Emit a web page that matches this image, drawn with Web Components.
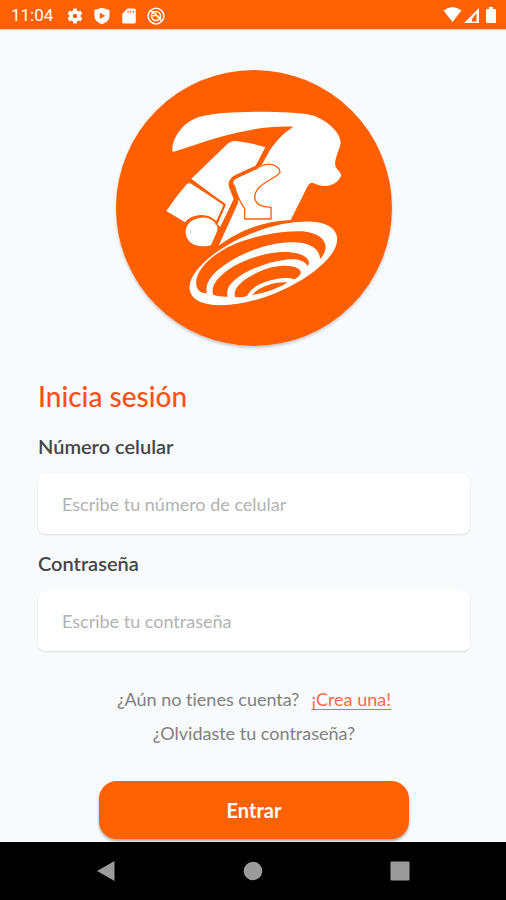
<!DOCTYPE html>
<html lang="es">
<head>
<meta charset="utf-8">
<meta name="viewport" content="width=device-width, initial-scale=1">
<title>Inicia sesión</title>
<style>
html, body { margin: 0; background: #f8fafc; }
body { font-family: Lato, "Open Sans", sans-serif; font-variant-ligatures: none; }
</style>
</head>
<body>
<login-screen></login-screen>
<script>
function define(name, html, init) {
  const template = document.createElement('template');
  template.innerHTML = html;
  customElements.define(name, class extends HTMLElement {
    constructor() {
      super();
      this.attachShadow({ mode: 'open' }).append(template.content.cloneNode(true));
    }
    connectedCallback() { if (init) init(this, this.shadowRoot); }
  });
}

define('status-bar', `
<style>
:host { display: flex; align-items: center; justify-content: space-between; height: 29px; padding: 0 6px 0 11px; background: #ff6104; color: #fff; font: 17px/29px Roboto, sans-serif; box-shadow: 0 1px 1px #ffc9a8; }
.left { display: flex; align-items: center; gap: 9px; padding-top: 2px; }
.right { display: flex; align-items: center; gap: 1px; padding-top: 1px; }
time { margin-right: 4px; }
svg { display: block; width: 18px; height: 18px; fill: #fff; }
</style>
<div class="left">
  <time>11:04</time>
  <svg viewBox="0 0 24 24"><path fill-rule="evenodd" d="M19.4 13c0-.3.1-.6.1-1s0-.7-.1-1l2.100-1.700c.2-.1.300-.4.100-.6l-2-3.500c-.1-.2-.4-.3-.6-.2l-2.500 1a7.300 7.300 0 0 0-1.700-1l-.4-2.600c0-.3-.2-.4-.4-.4h-4c-.3 0-.5.200-.5.400L9.100 5a7.700 7.700 0 0 0-1.700 1l-2.500-1c-.2-.1-.5 0-.6.200l-2 3.500c-.1.200-.1.500.1.600L4.500 11a7.900 7.900 0 0 0 0 2l-2.100 1.700c-.2.100-.2.400-.1.600l2 3.500c.1.200.4.300.6.200l2.500-1c.5.400 1.100.7 1.700 1l.4 2.600c0 .200.2.400.5.400h4c.2 0 .4-.2.4-.4l.4-2.600c.6-.3 1.200-.6 1.700-1l2.500 1c.2.100.5 0 .6-.2l2-3.500c.2-.2.1-.5-.1-.6zM12 15a3 3 0 1 1 0-6 3 3 0 0 1 0 6z"/></svg>
  <svg viewBox="0 0 24 24"><path fill-rule="evenodd" d="M12 1 2 4v8c0 5 4 9 10 11 6-2 10-6 10-11V4zM9 7.500v8.500l7.500-4.200z"/></svg>
  <svg viewBox="0 0 24 24"><path fill-rule="evenodd" d="M10 2 3 9v11q0 2 2 2h14q2 0 2-2V4q0-2-2-2zM10 4.500h1.500v3H10zm3.500 0H15v3h-1.500zm3.500 0h1.500v3H17z"/></svg>
  <svg viewBox="0 0 24 24"><g fill="none" stroke="#fff"><circle cx="12" cy="12" r="10.500" stroke-width="2"/><circle cx="12" cy="12" r="6" stroke-width="2.200"/><path d="M5 6q3-1 6 3l8 9M5 12l8-1" stroke-width="2.200"/></g></svg>
</div>
<div class="right">
  <svg viewBox="0 0 18 18" style="width:19px"><path d="M0 4.500Q9-2.500 18 4.500L9 16z"/></svg>
  <svg viewBox="0 0 18 18"><path fill-rule="evenodd" d="M1 17 16 2v15zm8-4v2.500h4.500V7z"/></svg>
  <svg viewBox="0 0 18 18"><path d="M7 1h4v2h2q1 0 1 1v12q0 1-1 1H5q-1 0-1-1V4q0-1 1-1h2z"/></svg>
</div>`);

define('brand-logo', `
<style>
:host { display: block; width: 276px; aspect-ratio: 1; border-radius: 50%; box-shadow: 0 2px 3px #0003; }
svg { display: block; width: 100%; height: 100%; }
</style>
<svg viewBox="17 18 828 828" role="img" aria-label="Logotipo">
  <circle cx="431" cy="432" r="414" fill="#ff5f00"/>
  <g fill="#fff">
    <path d="M186 262C184 222 217 175 266 159C340 137 560 141 606 154C642 165 691 202 691 237C687 261 671 286 675 305C679 317 691 324 693 333C686 354 664 369 636 365C620 364 612 355 602 357C592 360 586 380 579 392L541 468C460 470 382 502 325 545L384 415L362 352L454 303L479 258C500 229 519 207 549 188C446 182 330 215 195 262Q188 264 186 262Z"/>
    <path d="M243 344 352 239Q363 229 376 231Q422 237 461 248Q469 250 465 257L436 308 368 341Q348 351 358 374L370 405 331 489 321 481 346 424Z"/>
    <path d="M168 441Q196 399 229 361Q234 356 240 358L335 419Q342 423 339 429L318 471Q298 451 270 453Q238 455 224 475Z"/>
    <path d="M321 500Q324 486 314 476Q297 459 272 461C245 463 226 480 226 505C227 533 250 547 275 547Q296 547 303 543Z"/>
  </g>
  <g fill="none" stroke="#ff5f00" stroke-linejoin="round">
    <path d="M471 250 440 309 379 337Q358 346 365 365L377 407 306 548" stroke-width="11"/>
    <path d="M446 309Q468 297 486 302C501 306 511 317 508 326C502 339 462 351 443 374C424 398 434 425 464 428L482 430V465H403V434Q382 405 371 362" stroke-width="4"/>
    <path d="M362 359 383 410" stroke-width="9"/>
    <path d="M241 348 343 422 317 482" stroke-width="6"/>
  </g>
  <ellipse cx="459" cy="598" rx="238" ry="99" transform="rotate(-22 459 598)" fill="#fff" stroke="#ff5f00" stroke-width="5"/>
  <g fill="#ff5f00">
    <path d="M290 688C252 690 247 646 276 610C330 540 450 505 560 502C620 501 652 527 645 558Q640 575 629 585C628 550 592 533 540 535C450 537 340 590 301 641C289 657 286 675 290 688Z"/>
    <path d="M308 692C300 660 330 632 370 607C430 573 510 555 564 569C590 576 603 594 592 606C580 587 556 584 526 587C460 594 380 630 356 667C349 681 350 691 352 698Q325 699 308 692Z"/>
    <path d="M374 699C366 672 400 645 440 626C490 602 536 601 560 612C581 623 570 636 552 646C530 638 500 643 470 652C440 662 420 676 410 696Q395 701 374 699Z"/>
    <path d="M425 693C445 672 480 654 532 655C503 674 460 688 425 693Z"/>
  </g>
</svg>`);

define('text-field', `
<style>
:host { display: block; }
label { display: block; font-size: 20px; font-weight: 600; line-height: 24px; color: #444648; margin-bottom: 16px; }
input { display: block; box-sizing: border-box; width: 100%; height: 60px; padding: 0 24px; border: 0; border-radius: 7px; outline: 0; background: #fff; box-shadow: 0 1px 2px #0000001f; font: 18px Lato, sans-serif; color: #383a3c; }
input::placeholder { color: #b2b2b2; opacity: 1; }
</style>
<label for="field"></label>
<input id="field">`, (host, root) => {
  root.querySelector('label').textContent = host.getAttribute('label');
  const input = root.querySelector('input');
  input.placeholder = host.getAttribute('placeholder');
  input.type = host.getAttribute('type') || 'text';
});

define('primary-button', `
<style>
:host { display: block; }
button { display: block; width: 100%; height: 58px; border: 0; border-radius: 18px; background: #ff6104; color: #fff; font: 700 20px Lato, sans-serif; box-shadow: 0 2px 3px #0005; }
</style>
<button type="button"><slot></slot></button>`);

define('nav-bar', `
<style>
:host { display: flex; justify-content: space-between; align-items: center; height: 58px; padding: 0 96px; background: #000; position: relative; }
button { display: block; padding: 0; border: 0; background: none; }
svg { display: block; width: 20px; height: 20px; fill: #9b9b9b; }
</style>
<button type="button" aria-label="Atrás"><svg viewBox="0 0 20 20"><path d="M18.500 0v20L1 10z"/></svg></button>
<button type="button" aria-label="Inicio"><svg viewBox="0 0 20 20"><circle cx="10" cy="10" r="9.300"/></svg></button>
<button type="button" aria-label="Recientes"><svg viewBox="0 0 20 20"><rect x=".5" y=".5" width="19" height="19" rx="1"/></svg></button>`);

define('login-screen', `
<style>
:host { display: flex; flex-direction: column; min-height: 100vh; }
main { flex: 1; display: flex; flex-direction: column; padding: 41px 36px 3px 38px; }
brand-logo { align-self: center; }
h1 { margin: 34px 0 22px; font-size: 28px; font-weight: 500; line-height: 32px; color: #ff5016; }
text-field + text-field { margin-top: 17px; }
.links { display: flex; flex-direction: column; align-items: center; gap: 10px; margin: 36px 0; font-size: 18px; line-height: 24px; color: #808080; }
.links div { display: flex; gap: 12px; }
a { color: inherit; text-decoration: none; }
.links div a { color: #ff6a45; text-decoration: underline; text-decoration-thickness: 1px; text-underline-offset: 3px; }
primary-button { align-self: center; width: 310px; max-width: 100%; }
</style>
<status-bar></status-bar>
<main>
  <brand-logo></brand-logo>
  <h1>Inicia sesión</h1>
  <text-field label="Número celular" placeholder="Escribe tu número de celular" type="tel"></text-field>
  <text-field label="Contraseña" placeholder="Escribe tu contraseña" type="password"></text-field>
  <div class="links">
    <div><span>¿Aún no tienes cuenta?</span><a href="#registro">¡Crea una!</a></div>
    <a href="#recuperar">¿Olvidaste tu contraseña?</a>
  </div>
  <primary-button>Entrar</primary-button>
</main>
<nav-bar></nav-bar>`);
</script>
</body>
</html>
